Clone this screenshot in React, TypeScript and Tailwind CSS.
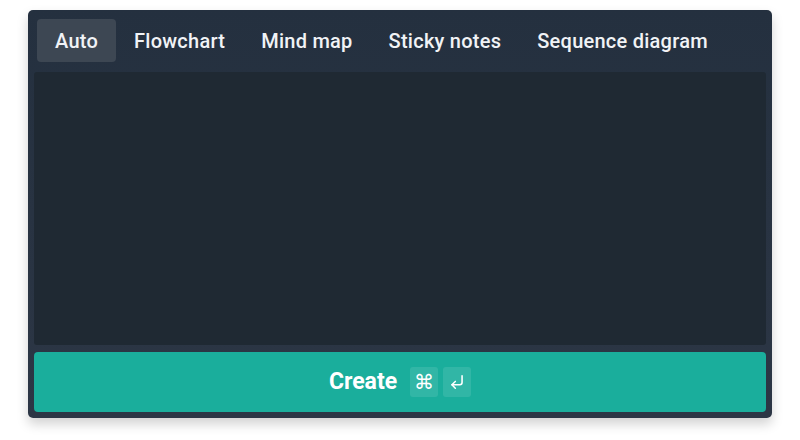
import { useState } from "react";

const tabs = ["Auto", "Flowchart", "Mind map", "Sticky notes", "Sequence diagram"];

export default function App() {
  const [active, setActive] = useState("Auto");
  const [text, setText] = useState("");

  return (
    <div
      className="w-[800px] h-[440px] bg-white pt-[10px] px-[28px]"
      style={{ fontFamily: "Roboto, 'Noto Sans', sans-serif" }}
    >
      <div className="h-[408px] rounded-[5px] bg-gradient-to-b from-[#24303f] to-[#2c3645] shadow-[0_6px_12px_rgba(0,0,0,0.18)] px-[6px] pb-[6px] flex flex-col">
        <div className="flex items-center pt-[9px] pl-[3px]">
          {tabs.map((t) => (
            <button
              key={t}
              onClick={() => setActive(t)}
              className={
                "h-[43px] px-[18px] rounded-[4px] text-[20px] font-medium tracking-[0.25px] text-[#f1f3f6] " +
                (active === t ? "bg-[#3d4753]" : "bg-transparent")
              }
            >
              {t}
            </button>
          ))}
        </div>
        <textarea
          value={text}
          onChange={(e) => setText(e.target.value)}
          className="mt-[10px] flex-1 resize-none rounded-[3px] bg-[#1f2933] outline-none p-3 text-[#e5e7eb] text-sm"
        />
        <button className="mt-[7px] h-[60px] rounded-[4px] bg-[#1aae9c] flex items-center justify-center gap-[5px] text-white">
          <span className="text-[23px] font-bold mr-[8px]">Create</span>
          <span className="w-[28px] h-[30px] rounded-[3px] bg-white/10 flex items-center justify-center text-[20px] leading-none">
            ⌘
          </span>
          <span className="w-[28px] h-[30px] rounded-[3px] bg-white/10 flex items-center justify-center">
            <svg width="18" height="18" viewBox="0 0 16 16" fill="none" stroke="currentColor" strokeWidth="1.4" strokeLinecap="round" strokeLinejoin="round">
              <path d="M12.5 2.5v6a2 2 0 0 1-2 2H3.5" />
              <path d="M6.5 7.5l-3 3 3 3" />
            </svg>
          </span>
        </button>
      </div>
    </div>
  );
}
